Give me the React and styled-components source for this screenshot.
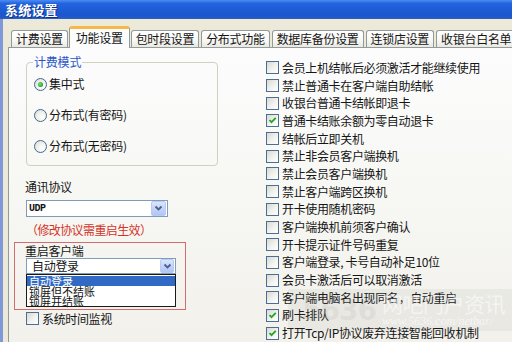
import React from 'react';
import styled, { createGlobalStyle } from 'styled-components';

const Global = createGlobalStyle`
  html, body { margin: 0; padding: 0; background: #ECE9D8; }
  body {
    font-family: "Noto Sans CJK SC", "Noto Sans", sans-serif;
    font-size: 12px;
    color: #151515;
  }
  * { box-sizing: border-box; }
`;

const Window = styled.div`
  position: relative;
  width: 512px;
  height: 342px;
  overflow: hidden;
  background: #ECE9D8;
  display: flex;
  flex-direction: column;
`;

const TitleBar = styled.div`
  flex: none;
  height: 19px;
  display: flex;
  align-items: center;
  padding-left: 5px;
  background: linear-gradient(#4C8DF2 0%, #2364DE 18%, #1D5BD4 55%, #1A56CC 85%, #2A5FC4 100%);
  color: #fff;
  font-size: 13px;
  font-weight: bold;
  letter-spacing: 0.2px;
  text-shadow: 1px 1px 0 #0B2F8C;
  line-height: 19px;
`;

const Frame = styled.div`
  flex: 1;
  min-height: 0;
  display: flex;
  flex-direction: column;
  border-left: 3px solid #7E98D8;
  padding: 7px 0 0 5px;
`;

const TabStrip = styled.div`
  position: relative;
  z-index: 1;
  flex: none;
  height: 22px;
  margin-bottom: -1px;
  padding-left: 3px;
  display: flex;
  align-items: flex-end;
  gap: 2px;
`;

const Tab = styled.div`
  flex: none;
  white-space: nowrap;
  letter-spacing: -0.3px;
  border: 1px solid #919B9C;
  border-bottom: none;
  border-radius: 3px 3px 0 0;
  height: ${p => (p.$active ? '22px' : '17px')};
  margin-bottom: ${p => (p.$active ? '0' : '1px')};
  margin-left: ${p => (p.$active ? '-1px' : '0')};
  margin-right: ${p => (p.$active ? '-1px' : '0')};
  padding: ${p => (p.$active ? '0 6px' : '0 4px')};
  line-height: ${p => (p.$active ? '18px' : '16px')};
  border-top: ${p => (p.$active ? '3px solid #F7B847' : '1px solid #919B9C')};
  background: ${p =>
    p.$active ? '#FCFCFD' : 'linear-gradient(#FFFFFF 0%, #F7F7F4 60%, #E9E8E1 100%)'};
`;

const Panel = styled.div`
  flex: 1;
  min-height: 0;
  display: flex;
  border-top: 1px solid #919B9C;
  border-left: 1px solid #919B9C;
  background: linear-gradient(#FCFCFD 0%, #F7F7F3 50%, #F2F1EC 100%);
`;

const LeftCol = styled.div`
  flex: none;
  width: 257px;
  padding-left: 5px;
  display: flex;
  flex-direction: column;
  align-items: flex-start;
`;

const GroupBox = styled.div`
  position: relative;
  margin: 14px 0 0 12px;
  width: 192px;
  height: 104px;
  border: 1px solid #D0D0BF;
  border-radius: 4px;
  padding: 14px 0 0 7px;
  display: flex;
  flex-direction: column;
  gap: 17px;
`;

const Legend = styled.span`
  position: absolute;
  top: -8px;
  left: 6px;
  padding: 0 1px;
  line-height: 14px;
  color: #2A55C8;
  background: #FCFCFD;
  letter-spacing: -0.2px;
`;

const OptionRow = styled.label`
  display: flex;
  align-items: center;
  height: 14px;
  line-height: 14px;
  gap: 2px;
  white-space: nowrap;
  letter-spacing: -0.3px;
`;

const RadioDot = styled.span`
  flex: none;
  width: 13px;
  height: 13px;
  border-radius: 50%;
  border: 1px solid #45698F;
  background: radial-gradient(circle at 65% 65%, #FFFFFF 0%, #F0F0EA 50%, #D6D6CF 100%);
  display: flex;
  align-items: center;
  justify-content: center;
  &::after {
    content: '';
    width: 5px;
    height: 5px;
    border-radius: 50%;
    background: radial-gradient(circle at 40% 40%, #7FE07F 0%, #2FA82F 60%, #1E8E1E 100%);
    display: ${p => (p.$checked ? 'block' : 'none')};
  }
`;

const FieldLabel = styled.div`
  margin: ${p => p.$m || '0'};
  line-height: 14px;
  white-space: nowrap;
  letter-spacing: -0.3px;
`;

const Select = styled.div`
  margin: ${p => p.$m || '0'};
  width: ${p => p.$w}px;
  height: ${p => p.$h}px;
  border: 1px solid #7F9DB9;
  background: #fff;
  display: flex;
  align-items: center;
  justify-content: space-between;
`;

const SelectValue = styled.span`
  padding-left: ${p => p.$pad || 2}px;
  font-family: ${p => (p.$latin ? '"Liberation Mono", monospace' : 'inherit')};
  font-weight: ${p => (p.$latin ? 'bold' : 'normal')};
  font-size: ${p => (p.$latin ? '10px' : '12px')};
  letter-spacing: ${p => (p.$latin ? '-0.5px' : '-0.3px')};
  line-height: 14px;
  white-space: nowrap;
`;

const DropButton = styled.span`
  flex: none;
  width: ${p => p.$s}px;
  height: ${p => p.$s}px;
  margin-right: 1px;
  border: 1px solid #B9CBF3;
  border-radius: 2px;
  background: linear-gradient(#DCE6FD 0%, #C3D4FA 50%, #B1C6F6 100%);
  display: flex;
  align-items: center;
  justify-content: center;
`;

const Note = styled.div`
  margin: 6px 0 0 12px;
  line-height: 14px;
  color: #D3352A;
  letter-spacing: -0.6px;
  white-space: nowrap;
`;

const RedBox = styled.div`
  margin-top: 5px;
  width: 172px;
  height: 68px;
  border: 1px solid #D46C6C;
  padding: 0 0 0 10px;
  display: flex;
  flex-direction: column;
  align-items: flex-start;
`;

const ListBox = styled.div`
  margin-left: 1px;
  width: 150px;
  height: 33px;
  border: 1px solid #1A1A1A;
  background: #fff;
  display: flex;
  flex-direction: column;
  padding-top: 0.5px;
`;

const ListItem = styled.div`
  flex: none;
  height: 10.3px;
  line-height: 10px;
  font-size: 11px;
  padding-left: 2px;
  white-space: nowrap;
  letter-spacing: 0;
  background: ${p => (p.$selected ? '#316AC5' : 'transparent')};
  color: ${p => (p.$selected ? '#fff' : '#151515')};
`;

const CheckBoxBox = styled.span`
  flex: none;
  width: 13px;
  height: 13px;
  border: 1px solid #4A6E95;
  background: linear-gradient(135deg, #D9D9D2 0%, #F2F2EE 55%, #FFFFFF 100%);
  display: flex;
  align-items: center;
  justify-content: center;
`;

const CheckRow = styled.div`
  display: flex;
  align-items: center;
  height: ${p => p.$h || '17.87px'};
  margin: ${p => p.$m || '0'};
  gap: 3px;
  white-space: nowrap;
  letter-spacing: -0.35px;
  line-height: 14px;
`;

const RightCol = styled.div`
  flex: 1;
  padding-top: 11px;
  display: flex;
  flex-direction: column;
`;

const Watermark = styled.div`
  position: absolute;
  left: 288px;
  top: 289px;
  width: 224px;
  height: 42px;
  background: rgba(120, 120, 110, 0.08);
  display: flex;
  align-items: center;
  gap: 6px;
  padding-left: 14px;
  pointer-events: none;
`;

const WmNum = styled.span`
  font-family: "DejaVu Sans", sans-serif;
  font-weight: bold;
  font-size: 28px;
  color: rgba(150, 150, 140, 0.14);
  letter-spacing: -1px;
`;

const WmText = styled.div`
  display: flex;
  flex-direction: column;
  line-height: 1;
`;

const WmBig = styled.span`
  font-size: 21px;
  color: rgba(255, 255, 255, 0.55);
  letter-spacing: -0.5px;
`;

const WmUrl = styled.span`
  font-family: "Liberation Serif", serif;
  font-style: italic;
  font-size: 12px;
  color: rgba(255, 255, 255, 0.6);
  margin-top: 1px;
`;

const Chevron = () => (
  <svg width="9" height="7" viewBox="0 0 9 7">
    <polyline points="1.5,1.5 4.5,4.5 7.5,1.5" fill="none" stroke="#4D6185" strokeWidth="1.8" />
  </svg>
);

const Check = () => (
  <svg width="9" height="9" viewBox="0 0 9 9">
    <polyline points="1.5,4 3.5,6.2 7.8,1.8" fill="none" stroke="#23A623" strokeWidth="1.8" />
  </svg>
);

const CheckItem = ({ checked, children, h, m }) => (
  <CheckRow $h={h} $m={m}>
    <CheckBoxBox>{checked && <Check />}</CheckBoxBox>
    <span>{children}</span>
  </CheckRow>
);

const tabs = ['计费设置', '功能设置', '包时段设置', '分布式功能', '数据库备份设置', '连锁店设置', '收银台白名单'];

const options = [
  ['会员上机结帐后必须激活才能继续使用', false],
  ['禁止普通卡在客户端自助结帐', false],
  ['收银台普通卡结帐即退卡', false],
  ['普通卡结账余额为零自动退卡', true],
  ['结帐后立即关机', false],
  ['禁止非会员客户端换机', false],
  ['禁止会员客户端换机', false],
  ['禁止客户端跨区换机', false],
  ['开卡使用随机密码', false],
  ['客户端换机前须客户确认', false],
  ['开卡提示证件号码重复', false],
  ['客户端登录, 卡号自动补足10位', false],
  ['会员卡激活后可以取消激活', false],
  ['客户端电脑名出现同名，自动重启', false],
  ['刷卡排队', true],
  ['打开Tcp/IP协议废弃连接智能回收机制', true],
];

export default function App() {
  return (
    <>
      <Global />
      <Window>
        <TitleBar>系统设置</TitleBar>
        <Frame>
          <TabStrip>
            {tabs.map((t, i) => (
              <Tab key={t} $active={i === 1}>{t}</Tab>
            ))}
          </TabStrip>
          <Panel>
            <LeftCol>
              <GroupBox>
                <Legend>计费模式</Legend>
                <OptionRow><RadioDot $checked />集中式</OptionRow>
                <OptionRow><RadioDot />分布式(有密码)</OptionRow>
                <OptionRow><RadioDot />分布式(无密码)</OptionRow>
              </GroupBox>
              <FieldLabel $m="14px 0 0 11px">通讯协议</FieldLabel>
              <Select $m="6px 0 0 12px" $w={142} $h={17}>
                <SelectValue $latin>UDP</SelectValue>
                <DropButton $s={15}><Chevron /></DropButton>
              </Select>
              <Note>（修改协议需重启生效）</Note>
              <RedBox>
                <FieldLabel $m="1px 0 0 0">重启客户端</FieldLabel>
                <Select $m="0 0 0 1px" $w={150} $h={16}>
                  <SelectValue $pad={5}>自动登录</SelectValue>
                  <DropButton $s={14}><Chevron /></DropButton>
                </Select>
                <ListBox>
                  <ListItem $selected>自动登录</ListItem>
                  <ListItem>锁屏但不结账</ListItem>
                  <ListItem>锁屏并结账</ListItem>
                </ListBox>
              </RedBox>
              <CheckItem h="13px" m="2px 0 0 12px">系统时间监视</CheckItem>
            </LeftCol>
            <RightCol>
              {options.map(([label, checked]) => (
                <CheckItem key={label} checked={checked}>{label}</CheckItem>
              ))}
            </RightCol>
          </Panel>
        </Frame>
        <Watermark>
          <WmNum>5636</WmNum>
          <WmText>
            <WmBig>网吧门户资讯</WmBig>
            <WmUrl>www.5636.com/netbar/</WmUrl>
          </WmText>
        </Watermark>
      </Window>
    </>
  );
}
